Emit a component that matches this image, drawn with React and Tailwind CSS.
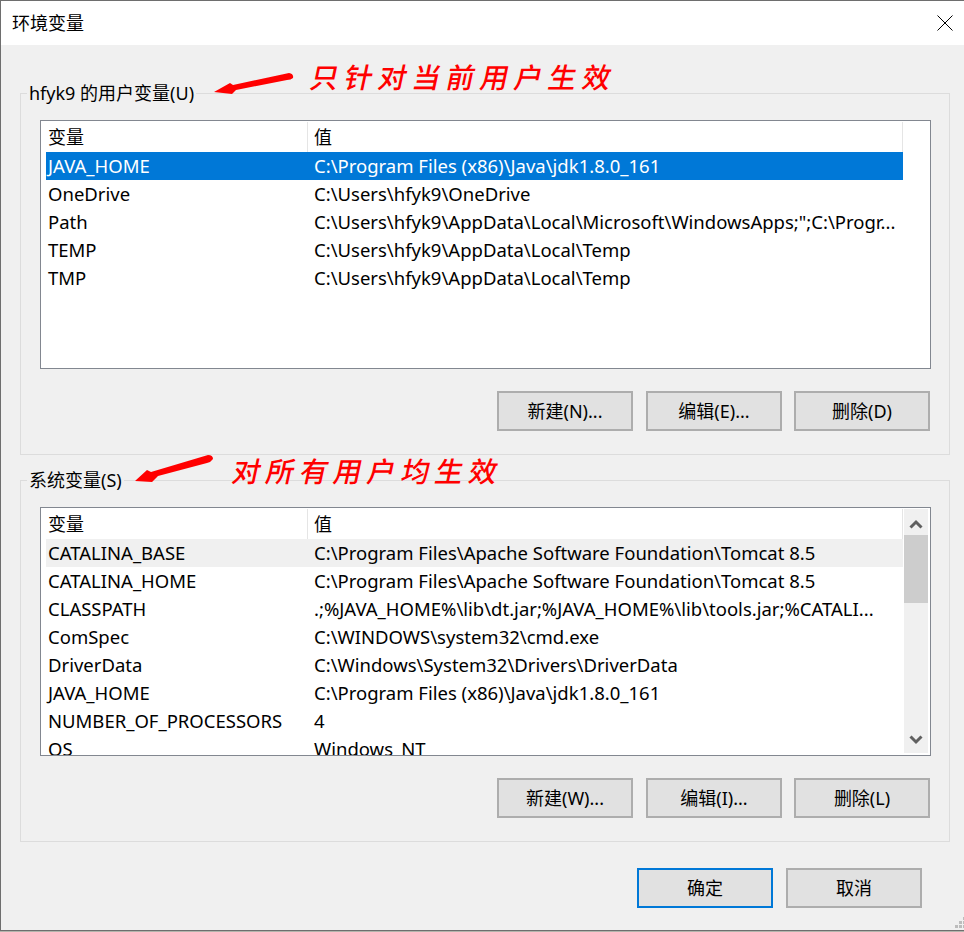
const userVars = [
  ["JAVA_HOME", "C:\\Program Files (x86)\\Java\\jdk1.8.0_161", "selected"],
  ["OneDrive", "C:\\Users\\hfyk9\\OneDrive"],
  ["Path", "C:\\Users\\hfyk9\\AppData\\Local\\Microsoft\\WindowsApps;\";C:\\Progr..."],
  ["TEMP", "C:\\Users\\hfyk9\\AppData\\Local\\Temp"],
  ["TMP", "C:\\Users\\hfyk9\\AppData\\Local\\Temp"],
];

const systemVars = [
  ["CATALINA_BASE", "C:\\Program Files\\Apache Software Foundation\\Tomcat 8.5", "hover"],
  ["CATALINA_HOME", "C:\\Program Files\\Apache Software Foundation\\Tomcat 8.5"],
  ["CLASSPATH", ".;%JAVA_HOME%\\lib\\dt.jar;%JAVA_HOME%\\lib\\tools.jar;%CATALI..."],
  ["ComSpec", "C:\\WINDOWS\\system32\\cmd.exe"],
  ["DriverData", "C:\\Windows\\System32\\Drivers\\DriverData"],
  ["JAVA_HOME", "C:\\Program Files (x86)\\Java\\jdk1.8.0_161"],
  ["NUMBER_OF_PROCESSORS", "4"],
  ["OS", "Windows_NT"],
];

function Row({ name, value, state }) {
  let cls = "text-[#000000]";
  if (state === "selected") cls = "bg-[#0078d7] text-white";
  if (state === "hover") cls = "bg-[#f0f0f0] text-[#000000]";
  return (
    <div className={`flex h-[28px] shrink-0 items-center text-[18.5px] whitespace-nowrap ${cls}`}>
      <div className="w-[261px] shrink-0 pl-[2px]">{name}</div>
      <div className="pl-[7px]">{value}</div>
    </div>
  );
}

function VarList({ rows, scroll }) {
  return (
    <div className="flex h-[249px] w-[891px] overflow-hidden border border-[#828790] bg-white">
      <div className="ml-[5px] flex w-[857px] shrink-0 flex-col overflow-hidden">
        <div className="flex h-[31px] shrink-0 items-center">
          <div className="flex h-[30px] w-[262px] shrink-0 items-center border-r border-[#e5e5e5] pl-[2px]">变量</div>
          <div className="flex h-[30px] flex-1 items-center border-r border-[#e5e5e5] pl-[6px]">值</div>
        </div>
        {rows.map((r) => (
          <Row key={r[0]} name={r[0]} value={r[1]} state={r[2]} />
        ))}
      </div>
      {scroll && (
        <div className="mt-[1px] mb-[2px] ml-[1px] flex w-[24px] shrink-0 flex-col bg-[#f0f0f0]">
          <div className="flex h-[26px] items-center justify-center pt-[4px]">
            <svg width="14" height="10" viewBox="0 0 14 10" fill="none" stroke="#606060" strokeWidth="3">
              <path d="M1.5 8.5 L7 3 L12.5 8.5" />
            </svg>
          </div>
          <div className="h-[68px] bg-[#cdcdcd]"></div>
          <div className="mt-auto flex h-[26px] items-center justify-center">
            <svg width="14" height="10" viewBox="0 0 14 10" fill="none" stroke="#606060" strokeWidth="3">
              <path d="M1.5 1.5 L7 7 L12.5 1.5" />
            </svg>
          </div>
        </div>
      )}
    </div>
  );
}

function Btn({ children, primary, className = "" }) {
  return (
    <button
      className={`flex h-[40px] w-[136px] items-center justify-center border-2 bg-[#e1e1e1] text-[#000000] ${
        primary ? "border-[#0078d7]" : "border-[#adadad]"
      } ${className}`}
    >
      {children}
    </button>
  );
}

function Group({ title, rows, scroll, labels, className = "" }) {
  return (
    <div className={`h-[362px] w-[930px] border border-[#dcdcdc] ${className}`}>
      <div className="-mt-[14px] ml-[6px] flex h-[26px] w-fit items-center bg-[#f0f0f0] px-[2px]">{title}</div>
      <div className="mt-[14px] pl-[19px]">
        <VarList rows={rows} scroll={scroll} />
      </div>
      <div className="mt-[22px] flex pl-[476px]">
        <Btn>{labels[0]}</Btn>
        <Btn className="ml-[13px]">{labels[1]}</Btn>
        <Btn className="ml-[12px]">{labels[2]}</Btn>
      </div>
    </div>
  );
}

export default function App() {
  return (
    <div className="relative h-[932px] w-[964px] overflow-hidden bg-[#b4b4ac] font-['Noto_Sans','Noto_Sans_CJK_SC',sans-serif] text-[18px] leading-[24px] text-[#000000]">
      <div className="h-[931px] border-t border-b border-l border-[#6e6e6e] bg-[#f0f0f0]">
        <div className="flex h-[44px] items-center justify-between bg-white pr-[11px] pl-[11px]">
          <span>环境变量</span>
          <svg width="16" height="16" viewBox="0 0 16 16" className="text-[#000000]">
            <path d="M0.5 0.5 L15.5 15.5 M15.5 0.5 L0.5 15.5" stroke="currentColor" strokeWidth="1" fill="none" />
          </svg>
        </div>
        <div className="pt-[48px] pl-[19px]">
          <Group
            title="hfyk9 的用户变量(U)"
            rows={userVars}
            labels={["新建(N)...", "编辑(E)...", "删除(D)"]}
          />
          <Group
            className="mt-[25px]"
            title="系统变量(S)"
            rows={systemVars}
            scroll
            labels={["新建(W)...", "编辑(I)...", "删除(L)"]}
          />
          <div className="mt-[26px] flex pl-[617px]">
            <Btn primary>确定</Btn>
            <Btn className="ml-[13px]">取消</Btn>
          </div>
        </div>
      </div>

      {/* hand-drawn notes on top of the screenshot */}
      <svg width="964" height="932" className="pointer-events-none absolute inset-0">
        <path d="M214 92 L230 83 L233 85 L289 73 Q294 74 293 78 Q291 80 287 80 L236 90 L232 94 Z" fill="#ff0000" />
        <path d="M135 481 L147 470 L151 472 L208 455 Q213 455 213 459 Q211 462 207 463 L158 476 L152 482 Z" fill="#ff0000" />
      </svg>
      <div className="absolute top-[60px] left-[311px] -skew-x-12 text-[28px] leading-[34px] font-medium tracking-[6px] whitespace-nowrap text-[#ff0000]">
        只针对当前用户生效
      </div>
      <div className="absolute top-[454px] left-[233px] -skew-x-12 text-[28px] leading-[34px] font-medium tracking-[5.8px] whitespace-nowrap text-[#ff0000]">
        对所有用户均生效
      </div>

      {/* resize grip */}
      <svg width="9" height="11" className="absolute top-[917px] left-[955px]" fill="#bcbcbc">
        <rect x="8" y="0" width="3" height="3" />
        <rect x="4" y="4" width="3" height="3" />
        <rect x="8" y="4" width="3" height="3" />
        <rect x="0" y="8" width="3" height="3" />
        <rect x="4" y="8" width="3" height="3" />
        <rect x="8" y="8" width="3" height="3" />
      </svg>
    </div>
  );
}
